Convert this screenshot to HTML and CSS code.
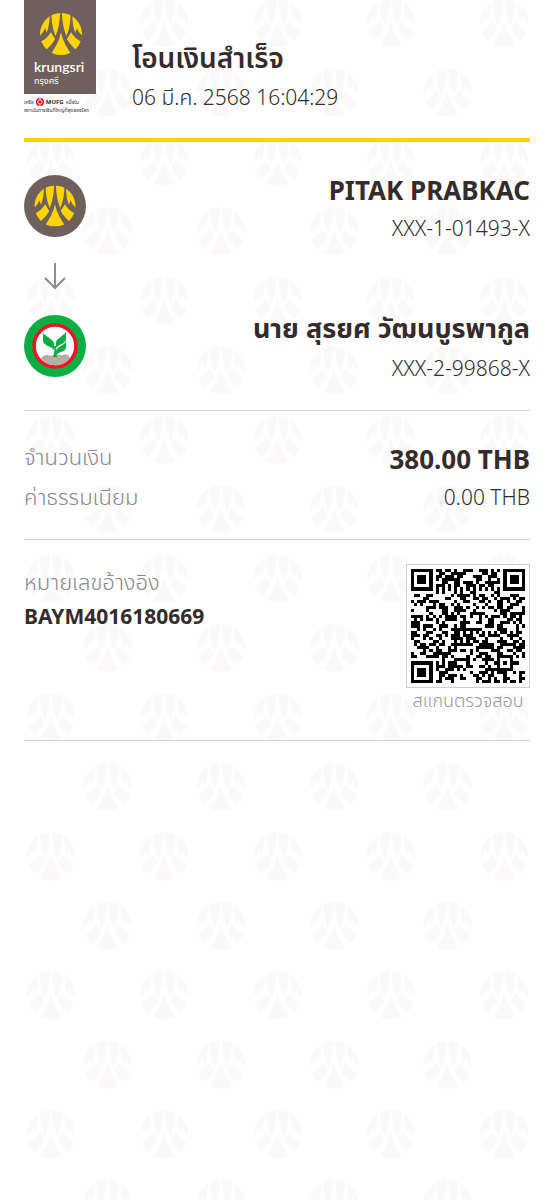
FILE: index.html
```
<!DOCTYPE html>
<html lang="th">
<head>
<meta charset="utf-8">
<meta name="viewport" content="width=device-width, initial-scale=1">
<title>โอนเงินสำเร็จ</title>
<link rel="stylesheet" href="styles.css">
</head>
<body>
<div class="watermark" aria-hidden="true">
<svg>
  <defs>
    <clipPath id="disc"><circle cx="50" cy="50" r="50"/></clipPath>
    <symbol id="mark" viewBox="0 0 100 100">
      <g clip-path="url(#disc)">
        <path d="M50 46C46 66 36 84 24 100H76C64 84 54 66 50 46Z"/>
        <path d="M52 0H73C73 20 70 38 63 55C56 40 53 20 52 0Z"/>
        <path d="M48 0H27C27 20 30 38 37 55C44 40 47 20 48 0Z"/>
        <path d="M77 0C77 20 79 34 84 47L88 36C91 44 95 50 101 54V0Z"/>
        <path d="M23 0C23 20 21 34 16 47L12 36C9 44 5 50 -1 54V0Z"/>
        <path d="M74 46L64 62C70 73 78 81 88 90L102 70C88 64 80 56 74 46Z"/>
        <path d="M26 46L36 62C30 73 22 81 12 90L-2 70C12 64 20 56 26 46Z"/>
      </g>
    </symbol>
    <pattern id="tile" patternUnits="userSpaceOnUse" x="3" y="-1" width="113.3" height="138.9">
      <use href="#mark" width="48" height="48"/>
      <use href="#mark" x="56.6" y="69.4" width="48" height="48"/>
    </pattern>
  </defs>
  <rect width="100%" height="100%" fill="url(#tile)"/>
</svg>
</div>

<main class="slip">
  <header class="header">
    <div class="brand">
      <div class="brand-box">
        <svg class="brand-mark" aria-hidden="true"><use href="#mark"/></svg>
        <span class="brand-name">krungsri</span>
        <span class="brand-thai">กรุงศรี</span>
      </div>
      <div class="tagline">
        <span class="tagline-row">เครือ
          <svg class="mufg" viewBox="0 0 20 20" aria-hidden="true"><circle cx="10" cy="10" r="10" fill="#e60012"/><circle cx="10" cy="10" r="5.5" fill="none" stroke="#fff" stroke-width="2.5"/><path d="M9 0h2v5H9zM9 15h2v5H9z" fill="#fff"/></svg>
          <b class="mufg-name">MUFG</b> หนึ่งใน</span>
        <span>สถาบันการเงินที่ใหญ่ที่สุดของโลก</span>
      </div>
    </div>
    <div class="heading">
      <h1 class="title">โอนเงินสำเร็จ</h1>
      <time class="value" datetime="2025-03-06T16:04:29">06 มี.ค. 2568 16:04:29</time>
    </div>
  </header>

  <section class="section parties">
    <div class="party">
      <svg class="bank" viewBox="0 0 62 62" aria-hidden="true">
        <circle cx="31" cy="31" r="31" fill="#6f605e"/>
        <use href="#mark" x="10.5" y="10.5" width="41" height="41" fill="#ffd400"/>
      </svg>
      <div class="person">
        <strong class="name">PITAK PRABKAC</strong>
        <span class="value">XXX-1-01493-X</span>
      </div>
    </div>
    <svg class="arrow" viewBox="0 0 24 28" aria-hidden="true"><path d="M12 1V26M2 16L12 26L22 16"/></svg>
    <div class="party">
      <svg class="bank" viewBox="0 0 62 62" aria-hidden="true">
        <circle cx="31" cy="31" r="31" fill="#0aae43"/>
        <circle cx="31" cy="31" r="21" fill="#fff" stroke="#f01423" stroke-width="3.6"/>
        <path d="M17 44C18 40 23 39 27 41C31 38 36 41 39 40C43 38 45 41 46 43C41 50 34 51 30 50C25 50 20 48 17 44Z" fill="#b8aca6"/>
        <path d="M19 18C22 22 28 23 30 28V35C27 31 20 31 19 26Z" fill="#0aae43"/>
        <path d="M42 17C38 22 33 23 32 27V33C36 28 42 29 42 24Z" fill="#0aae43"/>
        <path d="M42 27C38 32 33 31 32 36V40C36 36 42 37 42 32Z" fill="#0aae43"/>
        <path d="M30 31C31 35 30 38 29 42H33C32 38 32 35 32 31Z" fill="#0aae43"/>
      </svg>
      <div class="person">
        <strong class="name name-thai">นาย สุรยศ วัฒนบูรพากูล</strong>
        <span class="value">XXX-2-99868-X</span>
      </div>
    </div>
  </section>

  <dl class="section amounts">
    <div class="row"><dt class="label">จำนวนเงิน</dt><dd class="name">380.00 THB</dd></div>
    <div class="row"><dt class="label">ค่าธรรมเนียม</dt><dd class="value">0.00 THB</dd></div>
  </dl>

  <section class="section reference">
    <div class="ref">
      <span class="label">หมายเลขอ้างอิง</span>
      <strong class="code">BAYM4016180669</strong>
    </div>
    <figure class="scan">
      <div class="qr"><svg id="qr" viewBox="0 0 37 37" shape-rendering="crispEdges" role="img" aria-label="QR"></svg></div>
      <figcaption class="caption">สแกนตรวจสอบ</figcaption>
    </figure>
  </section>
</main>
<script src="qr.js"></script>
</body>
</html>
```
FILE: styles.css
```
* { box-sizing: border-box; }

body {
  position: relative;
  min-height: 100vh;
  margin: 0;
  background: #fefefe;
  color: #332c2a;
  font-family: "Noto Sans", "Noto Sans Thai", "Open Sans", sans-serif;
}

.watermark {
  position: absolute;
  inset: 0 24px;
  z-index: -1;
  fill: #faf8f9;
}

.watermark svg { display: block; width: 100%; height: 100%; }

.slip { padding: 0 24px; }

.header {
  display: flex;
  gap: 36px;
  height: 142px;
  border-bottom: 4px solid #ffd400;
}

.brand { width: 72px; }

.brand-box {
  display: flex;
  flex-direction: column;
  height: 94px;
  padding: 13px 10px 0;
  background: #6f605e;
  color: #fff;
}

.brand-mark {
  width: 42px;
  height: 42px;
  margin-left: 6px;
  fill: #ffd400;
}

.brand-name {
  margin-top: 4px;
  font: 600 14px/16px Lato, sans-serif;
}

.brand-thai { font-size: 9px; line-height: 12px; }

.tagline {
  display: flex;
  flex-direction: column;
  margin-top: 4px;
  font-size: 5px;
  line-height: 8px;
  white-space: nowrap;
}

.tagline-row { display: flex; align-items: center; gap: 2px; }

.mufg { width: 8px; height: 8px; }

.mufg-name { font-size: 6px; }

.heading {
  display: flex;
  flex-direction: column;
  gap: 4px;
  padding-top: 39px;
}

.title {
  margin: 0;
  font-size: 28px;
  font-weight: 600;
  line-height: 36px;
}

.value { font-size: 21px; font-weight: 300; line-height: 36px; }

.name { font-size: 26px; font-weight: 700; line-height: 40px; }

.name-thai { font-size: 27px; line-height: 36px; padding-bottom: 4px; }

.label { color: #8d8988; font-size: 22px; font-weight: 300; line-height: 34px; }

.code { font-size: 21px; font-weight: 700; line-height: 36px; }

.section { margin: 0; border-bottom: 1px solid #d2d2d2; }

.parties { padding: 28px 0 24px; }

.party { display: flex; justify-content: space-between; }

.bank { width: 62px; height: 62px; margin-top: 5px; }

.person {
  display: flex;
  flex-direction: column;
  align-items: flex-end;
}

.arrow {
  display: block;
  width: 24px;
  height: 28px;
  margin: 16px 0 20px 19px;
  fill: none;
  stroke: #8e8e8e;
  stroke-width: 2;
}

.amounts { padding: 28px 0 24px; }

.row { display: flex; align-items: flex-start; justify-content: space-between; }

.row dd { margin: 0; }

.reference {
  display: flex;
  justify-content: space-between;
  padding: 24px 0 28px;
}

.ref { display: flex; flex-direction: column; }

.scan {
  display: flex;
  flex-direction: column;
  align-items: center;
  margin: 0;
}

.qr {
  width: 124px;
  padding: 4px;
  border: 1px solid #cfcfcf;
  background: #fff;
}

.qr svg { display: block; width: 100%; }

.caption { color: #9b9796; font-size: 18px; font-weight: 300; line-height: 24px; }
```
FILE: qr.js
```
const size = 37;
let seed = 4016;
const random = () => {
  seed = (seed * 1103515245 + 12345) % 2147483648;
  return seed / 2147483648;
};
const ring = (x, y, cx, cy) => Math.max(Math.abs(x - cx), Math.abs(y - cy));
const module = (x, y) => {
  const noise = random() < 0.5;
  for (const [cx, cy] of [[3, 3], [33, 3], [3, 33]]) {
    const d = ring(x, y, cx, cy);
    if (d <= 4) return d !== 2 && d !== 4;
  }
  const a = ring(x, y, 30, 30);
  if (a <= 2) return a !== 1;
  if (x === 6) return y % 2 === 0;
  if (y === 6) return x % 2 === 0;
  return noise;
};
let d = "";
for (let y = 0; y < size; y++) {
  for (let x = 0; x < size; x++) {
    if (module(x, y)) d += `M${x} ${y}h1v1h-1z`;
  }
}
const path = document.createElementNS("http://www.w3.org/2000/svg", "path");
path.setAttribute("d", d);
document.getElementById("qr").append(path);
```
